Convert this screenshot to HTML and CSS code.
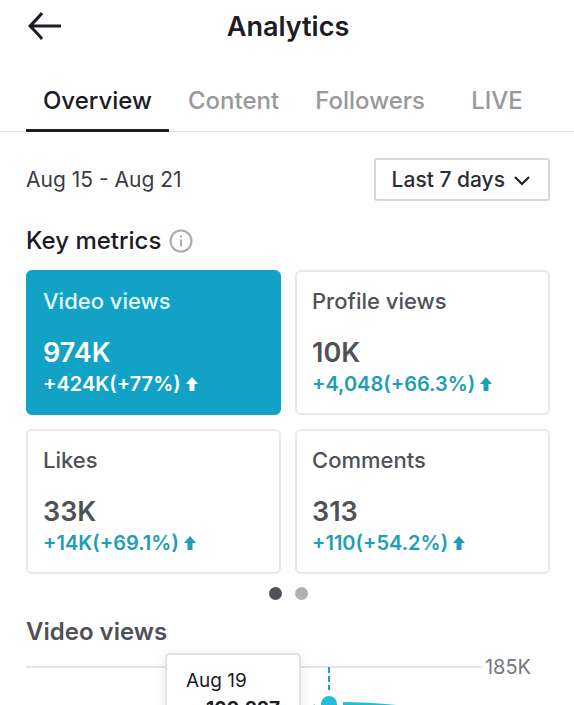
FILE: index.html
```html
<!DOCTYPE html>
<html lang="en">

<head>
    <meta charset="UTF-8">
    <meta name="viewport" content="width=device-width, initial-scale=1.0">
    <title>Analytics</title>
    <link rel="stylesheet" href="styles.css">
</head>

<body>
    <header class="header">
        <button type="button" class="back" aria-label="Back">
            <svg width="34" height="30" viewBox="0 0 34 30" fill="none" stroke="currentColor" stroke-width="3">
                <path d="M33 15H2M14 2C11 6 6 11 2 15C6 19 11 24 14 28" />
            </svg>
        </button>
        <h1>Analytics</h1>
    </header>

    <nav class="tabs">
        <a href="#overview" class="tab active">Overview</a>
        <a href="#content" class="tab">Content</a>
        <a href="#followers" class="tab">Followers</a>
        <a href="#live" class="tab">LIVE</a>
    </nav>

    <main class="content">
        <div class="period">
            <span class="dates">Aug 15 - Aug 21</span>
            <div class="range">
                <select id="range" name="range" aria-label="Date range">
                    <option selected>Last 7 days</option>
                    <option>Last 28 days</option>
                    <option>Last 60 days</option>
                </select>
                <svg class="chevron" width="16" height="10" viewBox="0 0 16 10" fill="none" stroke="currentColor" stroke-width="2">
                    <path d="M1 1L8 8L15 1" />
                </svg>
            </div>
        </div>

        <div class="section-title">
            <h2>Key metrics</h2>
            <button type="button" class="info" aria-label="About key metrics">
                <svg width="24" height="24" viewBox="0 0 24 24" fill="none" stroke="currentColor" stroke-width="2">
                    <circle cx="12" cy="12" r="10.5" />
                    <path d="M12 10.5V17.5M12 6.5V8.5" />
                </svg>
            </button>
        </div>

        <div class="metrics">
            <button type="button" class="card selected">
                <span class="label">Video views</span>
                <span class="value">974K</span>
                <span class="change">+424K(+77%)
                    <svg width="12" height="14" viewBox="0 0 12 14" fill="currentColor"><path d="M6 0L12 7H8.5V14H3.5V7H0Z" /></svg>
                </span>
            </button>
            <button type="button" class="card">
                <span class="label">Profile views</span>
                <span class="value">10K</span>
                <span class="change">+4,048(+66.3%)
                    <svg width="12" height="14" viewBox="0 0 12 14" fill="currentColor"><path d="M6 0L12 7H8.5V14H3.5V7H0Z" /></svg>
                </span>
            </button>
            <button type="button" class="card">
                <span class="label">Likes</span>
                <span class="value">33K</span>
                <span class="change">+14K(+69.1%)
                    <svg width="12" height="14" viewBox="0 0 12 14" fill="currentColor"><path d="M6 0L12 7H8.5V14H3.5V7H0Z" /></svg>
                </span>
            </button>
            <button type="button" class="card">
                <span class="label">Comments</span>
                <span class="value">313</span>
                <span class="change">+110(+54.2%)
                    <svg width="12" height="14" viewBox="0 0 12 14" fill="currentColor"><path d="M6 0L12 7H8.5V14H3.5V7H0Z" /></svg>
                </span>
            </button>
        </div>

        <div class="dots">
            <span class="dot current"></span>
            <span class="dot"></span>
        </div>

        <h2 class="chart-title">Video views</h2>
        <div class="chart">
            <div class="gridline"><span>185K</span></div>
            <!-- Selected point -->
            <svg class="marker" width="120" height="60" viewBox="0 0 120 60" fill="none">
                <path d="M0 47C14 40 24 38 40 38C70 38 90 39 120 44" stroke="#20bfce" stroke-width="4" />
                <path d="M31 1V25" stroke="#219fad" stroke-width="2" stroke-dasharray="6 3" />
                <circle cx="31" cy="38" r="14" fill="#fff" />
                <circle cx="31" cy="38" r="8" fill="#20bfd5" />
            </svg>
            <div class="tooltip">
                <span>Aug 19</span>
                <strong>160,227</strong>
            </div>
        </div>
    </main>
</body>

</html>
```

FILE: styles.css
```css
* {
    box-sizing: border-box;
}

body {
    display: flex;
    flex-direction: column;
    height: 100vh;
    margin: 0;
    overflow: hidden;
    background-color: #fefefe;
    color: #1b1c24;
    font-family: Inter, "Liberation Sans", sans-serif;
}

h1,
h2 {
    margin: 0;
    font-weight: 600;
}

button {
    padding: 0;
    border: none;
    background: none;
    color: inherit;
    font-family: inherit;
    cursor: pointer;
}

svg {
    display: block;
}

.header {
    display: grid;
    grid-template-columns: 34px 1fr 34px;
    align-items: center;
    height: 52px;
    padding: 0 26px 0 28px;
}

h1 {
    font-size: 27px;
    text-align: center;
}

.tabs {
    display: flex;
    gap: 2px;
    height: 80px;
    padding: 0 24px 0 26px;
    border-bottom: 1px solid #e4e4e4;
}

.tab {
    display: flex;
    align-items: center;
    justify-content: center;
    min-width: 106px;
    margin-bottom: -1px;
    padding: 20px 18px 0;
    border-bottom: 3px solid transparent;
    color: #999;
    font-size: 24px;
    font-weight: 500;
    text-decoration: none;
}

.tab.active {
    border-bottom-color: #1b1c24;
    color: #1b1c24;
}

.content {
    display: flex;
    flex: 1;
    flex-direction: column;
    min-height: 0;
    padding: 26px 24px 0 26px;
}

.period {
    display: flex;
    align-items: center;
    justify-content: space-between;
}

.dates {
    color: #3b3c42;
    font-size: 21px;
}

.range {
    position: relative;
}

.range select {
    height: 43px;
    padding: 0 43px 0 16px;
    border: 2px solid #d8d8d8;
    border-radius: 3px;
    appearance: none;
    field-sizing: content;
    background-color: #fff;
    color: #2b2c33;
    font-family: inherit;
    font-size: 21px;
    font-weight: 500;
}

.chevron {
    position: absolute;
    top: 18px;
    right: 20px;
    pointer-events: none;
}

.section-title {
    display: flex;
    align-items: center;
    gap: 8px;
    margin: 25px 0 14px;
}

.section-title h2 {
    font-size: 24px;
    font-weight: 500;
    line-height: 30px;
}

.info {
    color: #aaa;
}

.metrics {
    display: grid;
    grid-template-columns: 1fr 1fr;
    gap: 14px;
}

.card {
    display: flex;
    flex-direction: column;
    padding: 15px;
    border: 2px solid #e8e8e8;
    border-radius: 6px;
    background-color: #fff;
    color: #505157;
    text-align: left;
}

.label {
    margin-bottom: 21px;
    font-size: 22px;
    font-weight: 500;
    line-height: 28px;
}

.value {
    font-size: 27px;
    font-weight: 600;
    line-height: 34px;
}

.change {
    display: flex;
    align-items: center;
    gap: 5px;
    color: #219db5;
    font-size: 20px;
    font-weight: 600;
    line-height: 28px;
}

.card.selected {
    border-color: #11a2c6;
    background-color: #11a2c6;
    color: #e3fbff;
}

.selected .value,
.selected .change {
    color: #fff;
}

.dots {
    display: flex;
    justify-content: center;
    gap: 13px;
    margin: 13px 0 17px;
}

.dot {
    width: 13px;
    height: 13px;
    border-radius: 50%;
    background-color: #b0b0b4;
}

.dot.current {
    background-color: #505059;
}

.chart-title {
    color: #505157;
    font-size: 24px;
    line-height: 30px;
}

.chart {
    position: relative;
    flex: 1;
    min-height: 0;
    padding-top: 7px;
}

.gridline {
    display: flex;
    align-items: center;
    gap: 3px;
    padding-right: 19px;
    color: #77777c;
    font-size: 20px;
    line-height: 26px;
}

.gridline::before {
    content: "";
    flex: 1;
    height: 2px;
    background-color: #e4e4e4;
}

.marker {
    position: absolute;
    top: 19px;
    left: 52%;
}

.tooltip {
    position: absolute;
    top: 6px;
    left: 139px;
    display: flex;
    flex-direction: column;
    width: 136px;
    height: 90px;
    padding: 12px 19px;
    border: 2px solid #e2e2e2;
    border-radius: 5px;
    background-color: #fff;
    box-shadow: 0 2px 12px rgba(0, 0, 0, 0.08);
    font-size: 19px;
    line-height: 28px;
}

.tooltip strong {
    align-self: flex-end;
    font-weight: 700;
}
```
